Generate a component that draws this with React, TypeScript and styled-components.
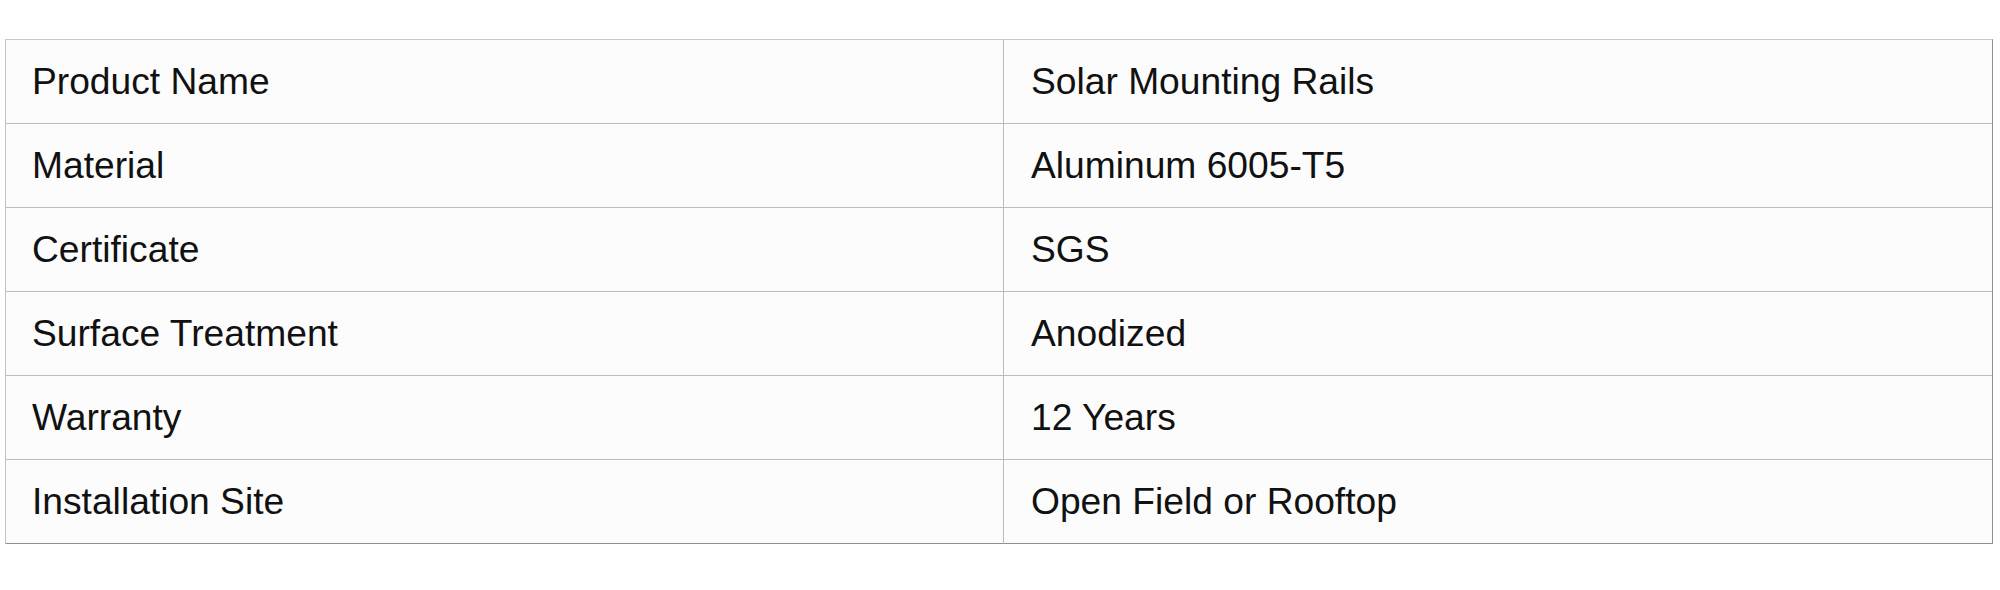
import React from "react";
import styled, { createGlobalStyle } from "styled-components";

const Global = createGlobalStyle`
  html, body { margin: 0; padding: 0; background: #ffffff; }
  body { font-family: "Liberation Sans", Arial, sans-serif; }
`;

const Page = styled.div`
  padding: 39px 0 0 5px;
`;

const Table = styled.div`
  display: grid;
  grid-template-columns: 998px 988px;
  grid-auto-rows: 84px;
  width: 1988px;
  border-top: 1px solid #c9c9c9;
  border-left: 1px solid #c4c4c4;
  border-right: 1px solid #8e8e8e;
  box-sizing: border-box;
`;

const Cell = styled.div<{ $first?: boolean; $last?: boolean }>`
  box-sizing: border-box;
  display: flex;
  align-items: center;
  padding-left: ${(p) => (p.$first ? "26px" : "27px")};
  border-bottom: 1px solid ${(p) => (p.$last ? "#8f8f8f" : "#bcbcbc")};
  border-right: ${(p) => (p.$first ? "1px solid #bcbcbc" : "none")};
  font-size: 37.2px;
  color: #111111;
  background: #fcfcfd;
  white-space: nowrap;
`;

const rows: [string, string][] = [
  ["Product Name", "Solar Mounting Rails"],
  ["Material", "Aluminum 6005-T5"],
  ["Certificate", "SGS"],
  ["Surface Treatment", "Anodized"],
  ["Warranty", "12 Years"],
  ["Installation Site", "Open Field or Rooftop"],
];

export default function App() {
  return (
    <>
      <Global />
      <Page>
        <Table>
          {rows.map(([k, v], i) => (
            <React.Fragment key={k}>
              <Cell $first $last={i === rows.length - 1}>
                {k}
              </Cell>
              <Cell $last={i === rows.length - 1}>{v}</Cell>
            </React.Fragment>
          ))}
        </Table>
      </Page>
    </>
  );
}
